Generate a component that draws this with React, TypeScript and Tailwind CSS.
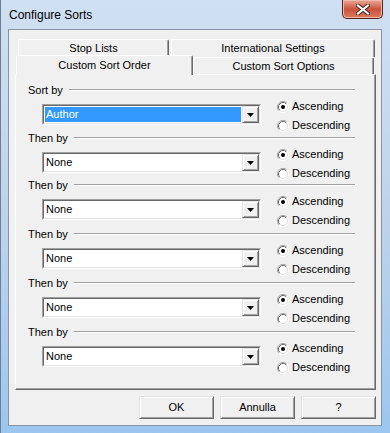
import React from 'react'

const rows = [
    { label: 'Sort by', value: 'Author', selected: true, h: 'h-[48px]' },
    { label: 'Then by', value: 'None', selected: false, h: 'h-[47px]' },
    { label: 'Then by', value: 'None', selected: false, h: 'h-[49px]' },
    { label: 'Then by', value: 'None', selected: false, h: 'h-[49px]' },
    { label: 'Then by', value: 'None', selected: false, h: 'h-[49px]' },
    { label: 'Then by', value: 'None', selected: false, h: 'h-[47px]' },
]

function Radio({ checked }: { checked?: boolean }) {
    return (
        <svg width="12" height="12" viewBox="0 0 12 12" className="shrink-0">
            <circle cx="6" cy="6" r="4.5" fill="#fff" />
            <path d="M2.11 9.89 A5.5 5.5 0 0 1 9.89 2.11" fill="none" stroke="#a0a0a0" />
            <path d="M9.89 2.11 A5.5 5.5 0 0 1 2.11 9.89" fill="none" stroke="#ffffff" />
            <path d="M2.82 9.18 A4.5 4.5 0 0 1 9.18 2.82" fill="none" stroke="#696969" />
            <path d="M9.18 2.82 A4.5 4.5 0 0 1 2.82 9.18" fill="none" stroke="#e3e3e3" />
            {checked && <circle cx="6" cy="6" r="2" fill="#000" />}
        </svg>
    )
}

function Combo({ value, selected }: { value: string; selected?: boolean }) {
    return (
        <div className="mt-[7px] flex h-[21px] w-[219px] border border-t-[#a0a0a0] border-l-[#a0a0a0] border-r-white border-b-white">
            <div className="flex flex-1 border border-t-[#696969] border-l-[#696969] border-r-[#e3e3e3] border-b-[#e3e3e3] bg-white">
                <div className="flex flex-1 p-px">
                    <div
                        className={
                            selected
                                ? 'flex flex-1 items-center bg-[#3399ff] pl-[1px] text-white'
                                : 'flex flex-1 items-center pl-[1px] text-black'
                        }
                    >
                        {value}
                    </div>
                </div>
                <div className="flex w-[17px] items-center justify-center border border-t-[#e3e3e3] border-l-[#e3e3e3] border-r-[#696969] border-b-[#696969] bg-[#f0f0f0] shadow-[inset_1px_1px_0_#fff,inset_-1px_-1px_0_#a0a0a0]">
                    <svg width="7" height="4" viewBox="0 0 7 4">
                        <polygon points="0,0 7,0 3.5,4" fill="#000" />
                    </svg>
                </div>
            </div>
        </div>
    )
}

function Button({ label }: { label: string }) {
    return (
        <div className="flex h-[23px] w-[75px] items-center justify-center border border-t-[#e3e3e3] border-l-[#e3e3e3] border-r-[#696969] border-b-[#696969] bg-[#f0f0f0] shadow-[inset_1px_1px_0_#fff,inset_-1px_-1px_0_#a0a0a0]">
            {label}
        </div>
    )
}

export default function App() {
    return (
        <div
            className="h-[433px] w-[390px] overflow-hidden border-l border-[#6b7f96] bg-gradient-to-b from-[#cfe0f2] via-[#bed3ea] to-[#9cc6ee] text-[11px] leading-[13px] text-black"
            style={{ fontFamily: '"Liberation Sans", Arial, sans-serif' }}
        >
            {/* title bar */}
            <div className="flex h-[29px] items-start justify-between">
                <div className="mt-[8px] ml-[8px] text-[12px] leading-[15px]">Configure Sorts</div>
                <div className="mr-[7px] flex h-[19px] w-[41px] items-center justify-center rounded-b-[5px] border border-t-0 border-[#5a2118] bg-gradient-to-b from-[#e9a99a] via-[#c9533b] to-[#d97a5f] shadow-[inset_0_0_0_1px_#f0b8a8]">
                    <svg width="14" height="11" viewBox="0 0 14 11">
                        <path d="M2 1.5 L12 9.5 M12 1.5 L2 9.5" stroke="#3d1a14" strokeWidth="4" strokeLinecap="square" />
                        <path d="M2 1.5 L12 9.5 M12 1.5 L2 9.5" stroke="#ffffff" strokeWidth="2.2" strokeLinecap="square" />
                    </svg>
                </div>
            </div>

            {/* client area */}
            <div className="ml-[7px] h-[397px] w-[374px] border border-[#8795a6] bg-[#f0f0f0] pt-[9px]">
                <div className="ml-[6px] w-[361px]">
                    {/* back row of tabs */}
                    <div className="flex h-[18px] gap-[2px] pl-[3px]">
                        <div className="flex w-[151px] justify-center rounded-t-[2px] border border-b-0 border-t-white border-l-white border-r-[#696969] pt-[2px] shadow-[inset_-1px_0_0_#a0a0a0]">
                            Stop Lists
                        </div>
                        <div className="flex w-[204px] justify-center rounded-t-[2px] border border-b-0 border-t-white border-l-white border-r-[#696969] pt-[2px] shadow-[inset_-1px_0_0_#a0a0a0]">
                            International Settings
                        </div>
                    </div>
                    {/* front row of tabs */}
                    <div className="relative -mt-[2px] flex h-[19px] items-end pl-[1px]">
                        <div className="relative z-10 -mb-px flex h-[20px] w-[177px] justify-center rounded-t-[2px] border border-b-0 border-t-white border-l-white border-r-[#696969] bg-[#f0f0f0] pt-[3px] shadow-[inset_-1px_0_0_#a0a0a0]">
                            Custom Sort Order
                        </div>
                        <div className="flex h-[17px] w-[181px] justify-center rounded-t-[2px] border border-b-0 border-t-white border-l-white border-r-[#696969] bg-[#f0f0f0] pt-[2px] shadow-[inset_-1px_0_0_#a0a0a0]">
                            Custom Sort Options
                        </div>
                    </div>
                    {/* panel */}
                    <div className="h-[316px] border border-t-white border-l-white border-r-[#696969] border-b-[#696969] pt-[8px] pl-[12px] shadow-[inset_-1px_-1px_0_#a0a0a0]">
                        {rows.map((row, i) => (
                            <div key={i} className={row.h}>
                                <div className="flex h-[14px] items-center pr-[20px]">
                                    <span>{row.label}</span>
                                    <div className="ml-[6px] flex-1 border-t border-b border-t-[#a0a0a0] border-b-white" />
                                </div>
                                <div className="flex">
                                    <div className="ml-[14px]">
                                        <Combo value={row.value} selected={row.selected} />
                                    </div>
                                    <div className="ml-[16px] flex flex-col">
                                        <div className="flex h-[19px] items-center gap-[3px]">
                                            <Radio checked />
                                            <span>Ascending</span>
                                        </div>
                                        <div className="flex h-[19px] items-center gap-[3px]">
                                            <Radio />
                                            <span>Descending</span>
                                        </div>
                                    </div>
                                </div>
                            </div>
                        ))}
                    </div>
                </div>
                {/* buttons */}
                <div className="mt-[6px] flex justify-end gap-[6px] pr-[5px]">
                    <Button label="OK" />
                    <Button label="Annulla" />
                    <Button label="?" />
                </div>
            </div>
        </div>
    )
}
